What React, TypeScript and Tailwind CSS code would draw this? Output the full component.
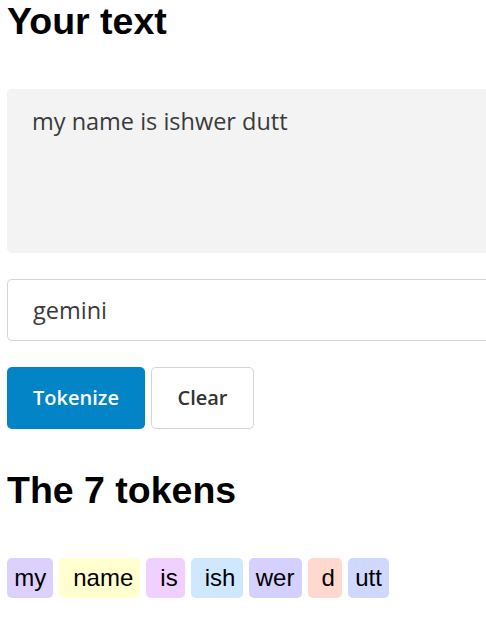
import { useState } from "react";

const tokens = [
  { text: "my", bg: "bg-[#dcd0ff]" },
  { text: " name", bg: "bg-[#ffffd0]" },
  { text: " is", bg: "bg-[#f0d0ff]" },
  { text: " ish", bg: "bg-[#d0e8ff]" },
  { text: "wer", bg: "bg-[#d4d0ff]" },
  { text: " d", bg: "bg-[#ffd8d0]" },
  { text: "utt", bg: "bg-[#d0d8ff]" },
];

export default function App() {
  const [text, setText] = useState("my name is ishwer dutt");
  const [model, setModel] = useState("gemini");

  return (
    <div className="w-full min-h-screen overflow-hidden bg-white">
      <div className="w-[600px] pl-[7px] font-['Liberation_Sans',Arial,sans-serif]">
        <h1 className="mt-px text-[37.5px] leading-[40px] font-bold text-black">Your text</h1>

        <textarea
          value={text}
          onChange={(e) => setText(e.target.value)}
          className="mt-12 block w-[560px] h-[164px] resize-none rounded-[5px] bg-[#f3f3f3] pl-[25px] pt-[17px] text-[23.5px] leading-[30px] text-[#3a3a3a] outline-none font-['Open_Sans',sans-serif]"
        />

        <input
          value={model}
          onChange={(e) => setModel(e.target.value)}
          className="mt-[26px] block w-[560px] h-[62px] rounded-[5px] border border-[#d4d4d4] pl-[25px] text-[23.5px] text-[#3a3a3a] outline-none font-['Open_Sans',sans-serif]"
        />

        <div className="mt-[26px] flex gap-[6px] font-['Open_Sans',sans-serif]">
          <button className="h-[62px] w-[138px] rounded-[5px] bg-[#0284c7] text-[20px] font-semibold text-white">
            Tokenize
          </button>
          <button className="h-[62px] w-[103px] rounded-[5px] border border-[#d4d4d4] bg-white text-[20px] font-semibold text-[#333]">
            Clear
          </button>
        </div>

        <h2 className="mt-[41px] text-[37.5px] leading-[40px] font-bold text-black">The 7 tokens</h2>

        <div className="mt-12 flex gap-[6px]">
          {tokens.map((t, i) => (
            <span
              key={i}
              className={`${t.bg} h-10 rounded-[5px] px-[7.2px] text-[24px] leading-10 text-black whitespace-pre`}
            >
              {t.text}
            </span>
          ))}
        </div>
      </div>
    </div>
  );
}
